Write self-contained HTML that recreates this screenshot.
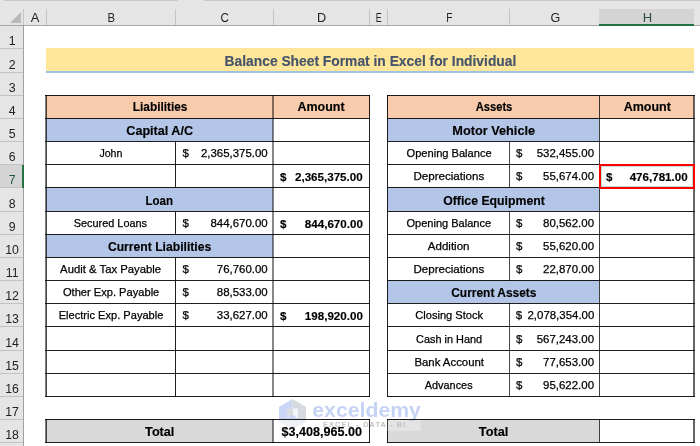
<!DOCTYPE html>
<html><head><meta charset="utf-8"><style>
html,body{margin:0;padding:0;background:#fff;width:700px;height:446px;overflow:hidden}
svg{display:block;font-family:"Liberation Sans",sans-serif}
</style></head><body>
<svg width="700" height="446" viewBox="0 0 700 446">
<rect x="0" y="0" width="700" height="25" fill="#e5e5e5"/>
<rect x="0" y="25" width="23" height="421" fill="#e5e5e5"/>
<rect x="4" y="0" width="174" height="1" fill="#c8c8c8"/>
<rect x="204" y="0" width="496" height="1" fill="#c8c8c8"/>
<polygon points="10,23 21,23 21,12" fill="#b9b9b9"/>
<rect x="599" y="9" width="95" height="16" fill="#d4d4d4"/>
<rect x="46" y="9" width="1" height="16" fill="#c4c4c4"/>
<rect x="175" y="9" width="1" height="16" fill="#c4c4c4"/>
<rect x="273" y="9" width="1" height="16" fill="#c4c4c4"/>
<rect x="369" y="9" width="1" height="16" fill="#c4c4c4"/>
<rect x="387" y="9" width="1" height="16" fill="#c4c4c4"/>
<rect x="509" y="9" width="1" height="16" fill="#c4c4c4"/>
<rect x="23" y="9" width="1" height="16" fill="#c4c4c4"/>
<rect x="0" y="25" width="700" height="1" fill="#a8a8a8"/>
<rect x="599" y="24" width="95" height="2" fill="#217346"/>
<rect x="23" y="26" width="1" height="420" fill="#a0a0a0"/>
<rect x="0" y="48" width="23" height="1" fill="#c2c2c2"/>
<rect x="0" y="72" width="23" height="1" fill="#c2c2c2"/>
<rect x="0" y="95" width="23" height="1" fill="#c2c2c2"/>
<rect x="0" y="118" width="23" height="1" fill="#c2c2c2"/>
<rect x="0" y="141" width="23" height="1" fill="#c2c2c2"/>
<rect x="0" y="164" width="23" height="1" fill="#c2c2c2"/>
<rect x="0" y="187" width="23" height="1" fill="#c2c2c2"/>
<rect x="0" y="211" width="23" height="1" fill="#c2c2c2"/>
<rect x="0" y="234" width="23" height="1" fill="#c2c2c2"/>
<rect x="0" y="257" width="23" height="1" fill="#c2c2c2"/>
<rect x="0" y="280" width="23" height="1" fill="#c2c2c2"/>
<rect x="0" y="303" width="23" height="1" fill="#c2c2c2"/>
<rect x="0" y="326" width="23" height="1" fill="#c2c2c2"/>
<rect x="0" y="350" width="23" height="1" fill="#c2c2c2"/>
<rect x="0" y="373" width="23" height="1" fill="#c2c2c2"/>
<rect x="0" y="396" width="23" height="1" fill="#c2c2c2"/>
<rect x="0" y="419" width="23" height="1" fill="#c2c2c2"/>
<rect x="0" y="442" width="23" height="1" fill="#c2c2c2"/>
<rect x="0" y="165" width="22" height="22" fill="#d4d4d4"/>
<rect x="22" y="165" width="2" height="23" fill="#217346"/>
<text transform="translate(35.0,21.75) scale(1.017,1)" font-size="12.7" fill="#222" text-anchor="middle">A</text>
<text transform="translate(111.25,21.75) scale(0.893,1)" font-size="12.7" fill="#222" text-anchor="middle">B</text>
<text transform="translate(224.6,21.75) scale(0.920,1)" font-size="12.7" fill="#222" text-anchor="middle">C</text>
<text transform="translate(321.5,21.75) scale(0.998,1)" font-size="12.7" fill="#222" text-anchor="middle">D</text>
<text transform="translate(378.7,21.75) scale(0.698,1)" font-size="12.7" fill="#222" text-anchor="middle">E</text>
<text transform="translate(449.25,21.75) scale(0.808,1)" font-size="12.7" fill="#222" text-anchor="middle">F</text>
<text transform="translate(555.3,21.75) scale(0.987,1)" font-size="12.7" fill="#222" text-anchor="middle">G</text>
<text transform="translate(647.45,21.75) scale(1.029,1)" font-size="12.7" fill="#2f5040" text-anchor="middle">H</text>
<text x="12.1" y="44.90" font-size="12.3" fill="#222" text-anchor="middle">1</text>
<text x="12.1" y="68.90" font-size="12.3" fill="#222" text-anchor="middle">2</text>
<text x="12.1" y="91.90" font-size="12.3" fill="#222" text-anchor="middle">3</text>
<text x="12.1" y="114.90" font-size="12.3" fill="#222" text-anchor="middle">4</text>
<text x="12.1" y="137.90" font-size="12.3" fill="#222" text-anchor="middle">5</text>
<text x="12.1" y="160.90" font-size="12.3" fill="#222" text-anchor="middle">6</text>
<text x="12.1" y="183.90" font-size="12.3" fill="#1d5a38" text-anchor="middle">7</text>
<text x="12.1" y="207.90" font-size="12.3" fill="#222" text-anchor="middle">8</text>
<text x="12.1" y="230.90" font-size="12.3" fill="#222" text-anchor="middle">9</text>
<text x="12.1" y="253.90" font-size="12.3" fill="#222" text-anchor="middle">10</text>
<text x="12.1" y="276.90" font-size="12.3" fill="#222" text-anchor="middle">11</text>
<text x="12.1" y="299.90" font-size="12.3" fill="#222" text-anchor="middle">12</text>
<text x="12.1" y="322.90" font-size="12.3" fill="#222" text-anchor="middle">13</text>
<text x="12.1" y="346.90" font-size="12.3" fill="#222" text-anchor="middle">14</text>
<text x="12.1" y="369.90" font-size="12.3" fill="#222" text-anchor="middle">15</text>
<text x="12.1" y="392.90" font-size="12.3" fill="#222" text-anchor="middle">16</text>
<text x="12.1" y="415.90" font-size="12.3" fill="#222" text-anchor="middle">17</text>
<text x="12.1" y="438.90" font-size="12.3" fill="#222" text-anchor="middle">18</text>
<rect x="46" y="48" width="648" height="23" fill="#ffe699"/>
<rect x="46" y="71" width="648" height="2" fill="#9dc3e6"/>
<text x="224.60" y="66.00" font-size="15" font-weight="bold" stroke="#44546a" stroke-width="0.15" fill="#44546a" textLength="291.70" lengthAdjust="spacingAndGlyphs">Balance Sheet Format in Excel for Individual</text>
<rect x="46" y="95" width="227" height="23" fill="#f8cbad"/>
<rect x="273" y="95" width="97" height="23" fill="#f8cbad"/>
<rect x="387" y="95" width="212" height="23" fill="#f8cbad"/>
<rect x="599" y="95" width="95" height="23" fill="#f8cbad"/>
<rect x="46" y="118" width="227" height="23" fill="#b4c6e7"/>
<rect x="46" y="187" width="227" height="24" fill="#b4c6e7"/>
<rect x="46" y="234" width="227" height="23" fill="#b4c6e7"/>
<rect x="387" y="118" width="212" height="23" fill="#b4c6e7"/>
<rect x="387" y="187" width="212" height="24" fill="#b4c6e7"/>
<rect x="387" y="280" width="212" height="23" fill="#b4c6e7"/>
<rect x="46" y="419" width="227" height="23" fill="#d9d9d9"/>
<rect x="387" y="419" width="212" height="23" fill="#d9d9d9"/>
<rect x="45" y="95" width="325" height="1" fill="#000" fill-opacity="0.88"/>
<rect x="387" y="95" width="308" height="1" fill="#000" fill-opacity="0.88"/>
<rect x="45" y="118" width="325" height="1" fill="#000" fill-opacity="0.88"/>
<rect x="387" y="118" width="308" height="1" fill="#000" fill-opacity="0.88"/>
<rect x="45" y="141" width="325" height="1" fill="#000" fill-opacity="0.88"/>
<rect x="387" y="141" width="308" height="1" fill="#000" fill-opacity="0.88"/>
<rect x="45" y="164" width="325" height="1" fill="#000" fill-opacity="0.88"/>
<rect x="387" y="164" width="308" height="1" fill="#000" fill-opacity="0.88"/>
<rect x="45" y="187" width="325" height="1" fill="#000" fill-opacity="0.88"/>
<rect x="387" y="187" width="308" height="1" fill="#000" fill-opacity="0.88"/>
<rect x="45" y="211" width="325" height="1" fill="#000" fill-opacity="0.88"/>
<rect x="387" y="211" width="308" height="1" fill="#000" fill-opacity="0.88"/>
<rect x="45" y="234" width="325" height="1" fill="#000" fill-opacity="0.88"/>
<rect x="387" y="234" width="308" height="1" fill="#000" fill-opacity="0.88"/>
<rect x="45" y="257" width="325" height="1" fill="#000" fill-opacity="0.88"/>
<rect x="387" y="257" width="308" height="1" fill="#000" fill-opacity="0.88"/>
<rect x="45" y="280" width="325" height="1" fill="#000" fill-opacity="0.88"/>
<rect x="387" y="280" width="308" height="1" fill="#000" fill-opacity="0.88"/>
<rect x="45" y="303" width="325" height="1" fill="#000" fill-opacity="0.88"/>
<rect x="387" y="303" width="308" height="1" fill="#000" fill-opacity="0.88"/>
<rect x="45" y="326" width="325" height="1" fill="#000" fill-opacity="0.88"/>
<rect x="387" y="326" width="308" height="1" fill="#000" fill-opacity="0.88"/>
<rect x="45" y="350" width="325" height="1" fill="#000" fill-opacity="0.88"/>
<rect x="387" y="350" width="308" height="1" fill="#000" fill-opacity="0.88"/>
<rect x="45" y="373" width="325" height="1" fill="#000" fill-opacity="0.88"/>
<rect x="387" y="373" width="308" height="1" fill="#000" fill-opacity="0.88"/>
<rect x="45" y="396" width="325" height="1" fill="#000" fill-opacity="0.88"/>
<rect x="387" y="396" width="308" height="1" fill="#000" fill-opacity="0.88"/>
<rect x="45" y="95" width="1" height="302" fill="#000" fill-opacity="0.5"/>
<rect x="46" y="95" width="1" height="302" fill="#000" fill-opacity="0.72"/>
<rect x="272" y="95" width="1" height="302" fill="#000" fill-opacity="0.47"/>
<rect x="273" y="95" width="1" height="302" fill="#000" fill-opacity="0.47"/>
<rect x="369" y="95" width="1" height="302" fill="#000" fill-opacity="0.87"/>
<rect x="387" y="95" width="1" height="302" fill="#000" fill-opacity="0.87"/>
<rect x="599" y="95" width="1" height="302" fill="#000" fill-opacity="0.75"/>
<rect x="693" y="95" width="1" height="302" fill="#000" fill-opacity="0.6"/>
<rect x="694" y="95" width="1" height="302" fill="#000" fill-opacity="0.6"/>
<rect x="175" y="141" width="1" height="24" fill="#000" fill-opacity="0.87"/>
<rect x="175" y="164" width="1" height="24" fill="#000" fill-opacity="0.87"/>
<rect x="175" y="211" width="1" height="24" fill="#000" fill-opacity="0.87"/>
<rect x="175" y="257" width="1" height="24" fill="#000" fill-opacity="0.87"/>
<rect x="175" y="280" width="1" height="24" fill="#000" fill-opacity="0.87"/>
<rect x="175" y="303" width="1" height="24" fill="#000" fill-opacity="0.87"/>
<rect x="175" y="326" width="1" height="25" fill="#000" fill-opacity="0.87"/>
<rect x="175" y="350" width="1" height="24" fill="#000" fill-opacity="0.87"/>
<rect x="175" y="373" width="1" height="24" fill="#000" fill-opacity="0.87"/>
<rect x="509" y="141" width="1" height="24" fill="#000" fill-opacity="0.7"/>
<rect x="509" y="164" width="1" height="24" fill="#000" fill-opacity="0.7"/>
<rect x="509" y="211" width="1" height="24" fill="#000" fill-opacity="0.7"/>
<rect x="509" y="234" width="1" height="24" fill="#000" fill-opacity="0.7"/>
<rect x="509" y="257" width="1" height="24" fill="#000" fill-opacity="0.7"/>
<rect x="509" y="303" width="1" height="24" fill="#000" fill-opacity="0.7"/>
<rect x="509" y="326" width="1" height="25" fill="#000" fill-opacity="0.7"/>
<rect x="509" y="350" width="1" height="24" fill="#000" fill-opacity="0.7"/>
<rect x="509" y="373" width="1" height="24" fill="#000" fill-opacity="0.7"/>
<rect x="45" y="419" width="325" height="1" fill="#000" fill-opacity="0.88"/>
<rect x="45" y="442" width="325" height="1" fill="#000" fill-opacity="0.88"/>
<rect x="45" y="419" width="1" height="24" fill="#000" fill-opacity="0.5"/>
<rect x="46" y="419" width="1" height="24" fill="#000" fill-opacity="0.72"/>
<rect x="272" y="419" width="1" height="24" fill="#000" fill-opacity="0.47"/>
<rect x="273" y="419" width="1" height="24" fill="#000" fill-opacity="0.47"/>
<rect x="369" y="419" width="1" height="24" fill="#000" fill-opacity="0.87"/>
<rect x="387" y="419" width="308" height="1" fill="#000" fill-opacity="0.88"/>
<rect x="387" y="442" width="308" height="1" fill="#000" fill-opacity="0.88"/>
<rect x="387" y="419" width="1" height="24" fill="#000" fill-opacity="0.87"/>
<rect x="599" y="419" width="1" height="24" fill="#000" fill-opacity="0.75"/>
<rect x="693" y="419" width="1" height="24" fill="#000" fill-opacity="0.6"/>
<rect x="694" y="419" width="1" height="24" fill="#000" fill-opacity="0.6"/>
<text x="132.80" y="111.40" font-size="12.5" font-weight="bold" stroke="#000" stroke-width="0.15" fill="#000" textLength="54.60" lengthAdjust="spacingAndGlyphs">Liabilities</text>
<text x="297.50" y="111.40" font-size="12.5" font-weight="bold" stroke="#000" stroke-width="0.15" fill="#000" textLength="47.10" lengthAdjust="spacingAndGlyphs">Amount</text>
<text x="126.30" y="134.70" font-size="12.5" font-weight="bold" stroke="#000" stroke-width="0.15" fill="#000" textLength="66.80" lengthAdjust="spacingAndGlyphs">Capital A/C</text>
<text x="99.40" y="156.70" font-size="11.45" stroke="#000" stroke-width="0.25" fill="#000" textLength="23.00" lengthAdjust="spacingAndGlyphs">John</text>
<text x="182.60" y="156.70" font-size="11.45" stroke="#000" stroke-width="0.25" fill="#000">$</text>
<text x="267.70" y="156.70" font-size="11.45" stroke="#000" stroke-width="0.25" fill="#000" text-anchor="end">2,365,375.00</text>
<text x="280.10" y="180.80" font-size="11.6" font-weight="bold" stroke="#000" stroke-width="0.15" fill="#000">$</text>
<text x="362.70" y="180.80" font-size="11.6" font-weight="bold" stroke="#000" stroke-width="0.15" fill="#000" text-anchor="end">2,365,375.00</text>
<text x="145.60" y="204.70" font-size="12.5" font-weight="bold" stroke="#000" stroke-width="0.15" fill="#000" textLength="27.40" lengthAdjust="spacingAndGlyphs">Loan</text>
<text x="73.80" y="226.70" font-size="11.45" stroke="#000" stroke-width="0.25" fill="#000" textLength="73.20" lengthAdjust="spacingAndGlyphs">Secured Loans</text>
<text x="182.60" y="226.70" font-size="11.45" stroke="#000" stroke-width="0.25" fill="#000">$</text>
<text x="267.70" y="226.70" font-size="11.45" stroke="#000" stroke-width="0.25" fill="#000" text-anchor="end">844,670.00</text>
<text x="280.10" y="227.80" font-size="11.6" font-weight="bold" stroke="#000" stroke-width="0.15" fill="#000">$</text>
<text x="362.90" y="227.80" font-size="11.6" font-weight="bold" stroke="#000" stroke-width="0.15" fill="#000" text-anchor="end">844,670.00</text>
<text x="107.90" y="250.70" font-size="12.5" font-weight="bold" stroke="#000" stroke-width="0.15" fill="#000" textLength="103.40" lengthAdjust="spacingAndGlyphs">Current Liabilities</text>
<text x="60.10" y="272.70" font-size="11.45" stroke="#000" stroke-width="0.25" fill="#000" textLength="101.00" lengthAdjust="spacingAndGlyphs">Audit &amp; Tax Payable</text>
<text x="182.60" y="272.70" font-size="11.45" stroke="#000" stroke-width="0.25" fill="#000">$</text>
<text x="267.70" y="272.70" font-size="11.45" stroke="#000" stroke-width="0.25" fill="#000" text-anchor="end">76,760.00</text>
<text x="62.90" y="295.70" font-size="11.45" stroke="#000" stroke-width="0.25" fill="#000" textLength="96.40" lengthAdjust="spacingAndGlyphs">Other Exp. Payable</text>
<text x="182.60" y="295.70" font-size="11.45" stroke="#000" stroke-width="0.25" fill="#000">$</text>
<text x="267.70" y="295.70" font-size="11.45" stroke="#000" stroke-width="0.25" fill="#000" text-anchor="end">88,533.00</text>
<text x="58.70" y="318.70" font-size="11.45" stroke="#000" stroke-width="0.25" fill="#000" textLength="104.70" lengthAdjust="spacingAndGlyphs">Electric Exp. Payable</text>
<text x="182.60" y="318.70" font-size="11.45" stroke="#000" stroke-width="0.25" fill="#000">$</text>
<text x="267.70" y="318.70" font-size="11.45" stroke="#000" stroke-width="0.25" fill="#000" text-anchor="end">33,627.00</text>
<text x="280.10" y="319.80" font-size="11.6" font-weight="bold" stroke="#000" stroke-width="0.15" fill="#000">$</text>
<text x="362.90" y="319.80" font-size="11.6" font-weight="bold" stroke="#000" stroke-width="0.15" fill="#000" text-anchor="end">198,920.00</text>
<text x="145.10" y="435.70" font-size="12.5" font-weight="bold" stroke="#000" stroke-width="0.15" fill="#000" textLength="29.30" lengthAdjust="spacingAndGlyphs">Total</text>
<text x="281.50" y="435.80" font-size="12.3" font-weight="bold" stroke="#000" stroke-width="0.15" fill="#000" textLength="80.50" lengthAdjust="spacingAndGlyphs">$3,408,965.00</text>
<text x="475.80" y="111.40" font-size="12.5" font-weight="bold" stroke="#000" stroke-width="0.15" fill="#000" textLength="36.50" lengthAdjust="spacingAndGlyphs">Assets</text>
<text x="623.70" y="111.40" font-size="12.5" font-weight="bold" stroke="#000" stroke-width="0.15" fill="#000" textLength="47.20" lengthAdjust="spacingAndGlyphs">Amount</text>
<text x="452.30" y="134.70" font-size="12.5" font-weight="bold" stroke="#000" stroke-width="0.15" fill="#000" textLength="82.80" lengthAdjust="spacingAndGlyphs">Motor Vehicle</text>
<text x="406.60" y="156.70" font-size="11.45" stroke="#000" stroke-width="0.25" fill="#000" textLength="85.00" lengthAdjust="spacingAndGlyphs">Opening Balance</text>
<text x="516.00" y="156.70" font-size="11.45" stroke="#000" stroke-width="0.25" fill="#000">$</text>
<text x="594.00" y="156.70" font-size="11.45" stroke="#000" stroke-width="0.25" fill="#000" text-anchor="end">532,455.00</text>
<text x="413.40" y="179.70" font-size="11.45" stroke="#000" stroke-width="0.25" fill="#000" textLength="70.90" lengthAdjust="spacingAndGlyphs">Depreciations</text>
<text x="516.00" y="179.70" font-size="11.45" stroke="#000" stroke-width="0.25" fill="#000">$</text>
<text x="594.00" y="179.70" font-size="11.45" stroke="#000" stroke-width="0.25" fill="#000" text-anchor="end">55,674.00</text>
<text x="606.00" y="180.80" font-size="11.6" font-weight="bold" stroke="#000" stroke-width="0.15" fill="#000">$</text>
<text x="687.70" y="180.80" font-size="11.6" font-weight="bold" stroke="#000" stroke-width="0.15" fill="#000" text-anchor="end">476,781.00</text>
<text x="443.20" y="204.70" font-size="12.5" font-weight="bold" stroke="#000" stroke-width="0.15" fill="#000" textLength="101.70" lengthAdjust="spacingAndGlyphs">Office Equipment</text>
<text x="406.40" y="226.70" font-size="11.45" stroke="#000" stroke-width="0.25" fill="#000" textLength="84.80" lengthAdjust="spacingAndGlyphs">Opening Balance</text>
<text x="516.00" y="226.70" font-size="11.45" stroke="#000" stroke-width="0.25" fill="#000">$</text>
<text x="594.00" y="226.70" font-size="11.45" stroke="#000" stroke-width="0.25" fill="#000" text-anchor="end">80,562.00</text>
<text x="427.80" y="249.70" font-size="11.45" stroke="#000" stroke-width="0.25" fill="#000" textLength="41.70" lengthAdjust="spacingAndGlyphs">Addition</text>
<text x="516.00" y="249.70" font-size="11.45" stroke="#000" stroke-width="0.25" fill="#000">$</text>
<text x="594.00" y="249.70" font-size="11.45" stroke="#000" stroke-width="0.25" fill="#000" text-anchor="end">55,620.00</text>
<text x="413.50" y="272.70" font-size="11.45" stroke="#000" stroke-width="0.25" fill="#000" textLength="70.70" lengthAdjust="spacingAndGlyphs">Depreciations</text>
<text x="516.00" y="272.70" font-size="11.45" stroke="#000" stroke-width="0.25" fill="#000">$</text>
<text x="594.00" y="272.70" font-size="11.45" stroke="#000" stroke-width="0.25" fill="#000" text-anchor="end">22,870.00</text>
<text x="451.20" y="296.70" font-size="12.5" font-weight="bold" stroke="#000" stroke-width="0.15" fill="#000" textLength="85.30" lengthAdjust="spacingAndGlyphs">Current Assets</text>
<text x="415.30" y="318.70" font-size="11.45" stroke="#000" stroke-width="0.25" fill="#000" textLength="67.80" lengthAdjust="spacingAndGlyphs">Closing Stock</text>
<text x="515.80" y="318.70" font-size="11.45" stroke="#000" stroke-width="0.25" fill="#000">$</text>
<text x="594.30" y="318.70" font-size="11.45" stroke="#000" stroke-width="0.25" fill="#000" text-anchor="end">2,078,354.00</text>
<text x="416.00" y="342.70" font-size="11.45" stroke="#000" stroke-width="0.25" fill="#000" textLength="66.10" lengthAdjust="spacingAndGlyphs">Cash in Hand</text>
<text x="516.00" y="342.70" font-size="11.45" stroke="#000" stroke-width="0.25" fill="#000">$</text>
<text x="594.00" y="342.70" font-size="11.45" stroke="#000" stroke-width="0.25" fill="#000" text-anchor="end">567,243.00</text>
<text x="414.40" y="365.70" font-size="11.45" stroke="#000" stroke-width="0.25" fill="#000" textLength="69.60" lengthAdjust="spacingAndGlyphs">Bank Account</text>
<text x="516.00" y="365.70" font-size="11.45" stroke="#000" stroke-width="0.25" fill="#000">$</text>
<text x="594.00" y="365.70" font-size="11.45" stroke="#000" stroke-width="0.25" fill="#000" text-anchor="end">77,653.00</text>
<text x="424.80" y="388.70" font-size="11.45" stroke="#000" stroke-width="0.25" fill="#000" textLength="47.80" lengthAdjust="spacingAndGlyphs">Advances</text>
<text x="516.00" y="388.70" font-size="11.45" stroke="#000" stroke-width="0.25" fill="#000">$</text>
<text x="594.00" y="388.70" font-size="11.45" stroke="#000" stroke-width="0.25" fill="#000" text-anchor="end">95,622.00</text>
<text x="478.80" y="435.70" font-size="12.5" font-weight="bold" stroke="#000" stroke-width="0.15" fill="#000" textLength="29.50" lengthAdjust="spacingAndGlyphs">Total</text>
<rect x="601" y="166" width="92" height="1" fill="#bfe3d6"/>
<rect x="601" y="186" width="92" height="1" fill="#bfe3d6"/>
<rect x="601" y="166" width="1" height="21" fill="#bfe3d6"/>
<rect x="692" y="166" width="1" height="21" fill="#bfe3d6"/>
<rect x="599" y="164" width="96" height="2" fill="#ff0000"/>
<rect x="599" y="187" width="96" height="2" fill="#ff0000"/>
<rect x="599" y="164" width="2" height="25" fill="#ff0000"/>
<rect x="693" y="164" width="2" height="25" fill="#ff0000"/>
<g style="mix-blend-mode:multiply">
<polygon points="292.5,399 292.5,428.5 279,421.5 279,407" fill="#cbd6f6"/>
<polygon points="292.5,399 306,407 306,421.5 292.5,428.5" fill="#d6d9de"/>
<polygon points="279,420 306,420 306,421.5 292.5,428.5 279,421.5" fill="#eef0f7"/>
<rect x="287" y="408.5" width="6" height="11" fill="#dadce2"/>
<rect x="293" y="408.5" width="5" height="11" fill="#f1f4f8"/>
<polygon points="286,419.5 292.5,414.5 299,419.5" fill="#cbd6f6"/>
<text x="312.3" y="417" font-size="21" font-weight="bold" fill="#c6d3f4" textLength="108.6" lengthAdjust="spacingAndGlyphs">exceldemy</text>
<text x="323" y="426.5" font-size="7.3" font-weight="bold" fill="#c2c2c2" textLength="82.3" lengthAdjust="spacing">EXCEL - DATA - BI</text>
</g>
<rect x="387.5" y="420" width="33.3" height="10.8" fill="#ffffff" opacity="0.3"/>
</svg>
</body></html>
